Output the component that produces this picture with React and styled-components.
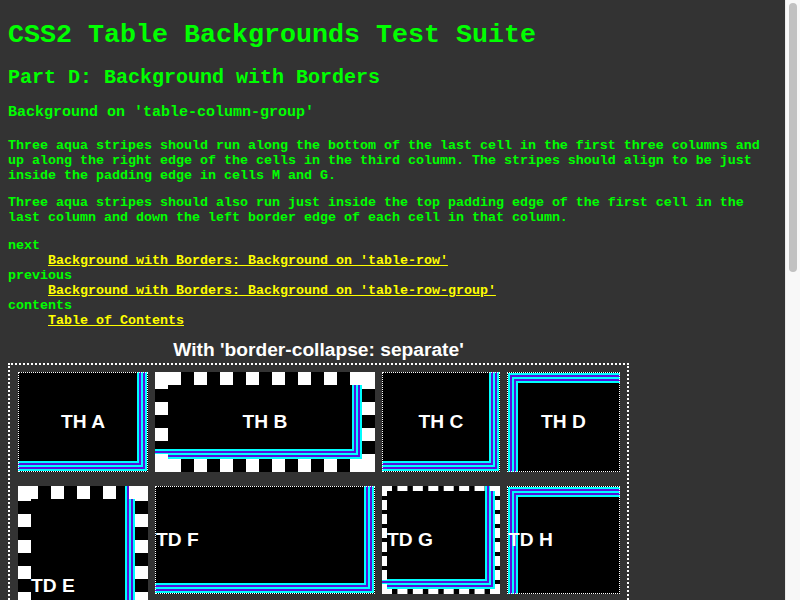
import React from 'react';
import styled, { createGlobalStyle } from 'styled-components';

const CYAN = '#00ffff';
const VIOLET = '#5511dd';
const STRIPES = [CYAN, VIOLET, CYAN, VIOLET, CYAN];
const BORDER = { dotted: 1, dashed: 5, checker: 13 };

const fill = (c) => `linear-gradient(${c}, ${c})`;

function stripeLayers(corner, b) {
  const [h, v] = corner === 'br' ? ['right', 'bottom'] : ['left', 'top'];
  return STRIPES.flatMap((c, k) => {
    const o = b + 2 * k;
    return [
      `${fill(c)} ${h} ${o}px ${v} ${o}px / calc(100% - ${o}px) 2px no-repeat border-box`,
      `${fill(c)} ${h} ${o}px ${v} ${o}px / 2px calc(100% - ${o}px) no-repeat border-box`,
    ];
  });
}

function checkerLayers(b, ox, oy) {
  const p = 2 * b;
  return [
    `${fill('#fff')} left top / ${b}px ${b}px no-repeat border-box`,
    `${fill('#fff')} right top / ${b}px ${b}px no-repeat border-box`,
    `${fill('#fff')} left bottom / ${b}px ${b}px no-repeat border-box`,
    `${fill('#fff')} right bottom / ${b}px ${b}px no-repeat border-box`,
    `linear-gradient(to right, #fff ${b}px, transparent ${b}px) ${ox}px top / ${p}px ${b}px repeat-x border-box`,
    `linear-gradient(to right, #fff ${b}px, transparent ${b}px) ${ox}px bottom / ${p}px ${b}px repeat-x border-box`,
    `linear-gradient(#fff ${b}px, transparent ${b}px) left ${oy}px / ${b}px ${p}px repeat-y border-box`,
    `linear-gradient(#fff ${b}px, transparent ${b}px) right ${oy}px / ${b}px ${p}px repeat-y border-box`,
  ];
}

const cellBackground = ({ $frame, $corner, $ox = 0, $oy = 0 }) => {
  const b = BORDER[$frame];
  const layers = [
    ...($frame === 'checker' ? checkerLayers(b, $ox, $oy) : []),
    ...($corner ? stripeLayers($corner, b) : []),
    '#000',
  ];
  return layers.join(',\n    ');
};

const cellBorder = ({ $frame }) =>
  $frame === 'checker'
    ? '13px solid transparent'
    : $frame === 'dashed'
    ? '5px dashed #fff'
    : '1px dotted #fff';

const GlobalStyle = createGlobalStyle`
  html, body {
    margin: 0;
    padding: 0;
    overflow: hidden;
    background: #333333;
  }
  body {
    color: #00ff00;
    font-family: "Liberation Mono", "Courier New", monospace;
    font-weight: bold;
    font-size: 13.333px;
  }
`;

const Screen = styled.div`
  display: flex;
  height: 100vh;
  overflow: hidden;
  background: #333333;
`;

const Page = styled.main`
  flex: 1 1 auto;
  min-width: 0;
  padding: 0 8px;
  overflow: hidden;
`;

const ScrollRail = styled.div`
  flex: 0 0 15px;
  box-sizing: border-box;
  height: 100%;
  background: #f8f8f8;
  border-left: 1px solid #ebebeb;
  padding: 3px 3px 0 3px;
`;

const ScrollThumb = styled.div`
  width: 8px;
  height: 269px;
  border-radius: 4px;
  background: #c1c1c1;
`;

const Title = styled.h1`
  margin: 20px 0 0;
  font-size: 26.667px;
  line-height: 30px;
  font-weight: bold;
`;

const Part = styled.h2`
  margin: 16px 0 0;
  font-size: 20px;
  line-height: 23px;
  font-weight: bold;
`;

const Section = styled.h3`
  margin: 15px 0 0;
  font-size: 15px;
  line-height: 17px;
  font-weight: bold;
`;

const Para = styled.p`
  margin: ${(p) => p.$top}px 0 0;
  line-height: 15px;
`;

const NavList = styled.dl`
  margin: 13px 0 0;
  line-height: 15px;
`;

const NavTerm = styled.dt`
  margin: 0;
`;

const NavItem = styled.dd`
  margin: 0 0 0 40px;
`;

const NavLink = styled.a`
  color: #ffff00;
  text-decoration: underline;
`;

const TableBlock = styled.div`
  display: flex;
  flex-direction: column;
  align-items: center;
  width: max-content;
  margin-top: ${(p) => p.$top}px;
`;

const Caption = styled.div`
  margin-bottom: 2px;
  color: #fff;
  font: bold 19.2px/22px "Liberation Sans", Arial, sans-serif;
`;

const Grid = styled.div`
  display: grid;
  grid-template-columns: 130px 220px 118px 113px;
  grid-template-rows: 100px 108px 77px 100px;
  column-gap: 7px;
  row-gap: 14px;
  padding: 7px 7px 7px 8px;
  border: 2px dotted #fff;
`;

const Cell = styled.div`
  box-sizing: border-box;
  display: flex;
  align-items: center;
  justify-content: ${(p) => (p.$head ? 'center' : 'flex-start')};
  grid-column: ${(p) => p.$col} / span ${(p) => p.$cspan || 1};
  grid-row: ${(p) => p.$row} / span ${(p) => p.$rspan || 1};
  border: ${cellBorder};
  background: ${cellBackground};
  color: #fff;
  font: bold 19.2px/22px "Liberation Sans", Arial, sans-serif;
  white-space: nowrap;
`;

const CELLS = [
  { t: 'TH A', head: true, col: 1, row: 1, frame: 'dotted', corner: 'br' },
  { t: 'TH B', head: true, col: 2, row: 1, frame: 'checker', corner: 'br', ox: 13, oy: 4 },
  { t: 'TH C', head: true, col: 3, row: 1, frame: 'dotted', corner: 'br' },
  { t: 'TH D', head: true, col: 4, row: 1, frame: 'dotted', corner: 'tl' },
  { t: 'TD E', col: 1, row: 2, rspan: 2, frame: 'checker', corner: 'br', ox: 7, oy: 2 },
  { t: 'TD F', col: 2, row: 2, frame: 'dotted', corner: 'br' },
  { t: 'TD G', col: 3, row: 2, frame: 'dashed', corner: 'br' },
  { t: 'TD H', col: 4, row: 2, frame: 'dotted', corner: 'tl' },
  { t: 'TD I', col: 2, row: 3, frame: 'dotted', corner: 'br' },
  { t: 'TD J', col: 3, row: 3, frame: 'dotted', corner: 'br' },
  { t: 'TD K', col: 4, row: 3, frame: 'dotted', corner: 'tl' },
  { t: 'TD L', col: 1, row: 4, frame: 'dotted', corner: 'br' },
  { t: 'TD M', col: 2, row: 4, cspan: 2, frame: 'dotted', corner: 'br' },
  { t: 'TD N', col: 4, row: 4, frame: 'dotted', corner: 'tl' },
];

function TestTable({ caption, top }) {
  return (
    <TableBlock $top={top}>
      <Caption>{caption}</Caption>
      <Grid>
        {CELLS.map((c) => (
          <Cell
            key={c.t}
            $head={c.head}
            $col={c.col}
            $row={c.row}
            $cspan={c.cspan}
            $rspan={c.rspan}
            $frame={c.frame}
            $corner={c.corner}
            $ox={c.ox}
            $oy={c.oy}
          >
            {c.t}
          </Cell>
        ))}
      </Grid>
    </TableBlock>
  );
}

export default function App() {
  return (
    <>
      <GlobalStyle />
      <Screen>
        <Page>
          <Title>CSS2 Table Backgrounds Test Suite</Title>
          <Part>Part D: Background with Borders</Part>
          <Section>Background on 'table-column-group'</Section>
          <Para $top={17}>
            Three aqua stripes should run along the bottom of the last cell in the first three columns and
            up along the right edge of the cells in the third column. The stripes should align to be just
            inside the padding edge in cells M and G.
          </Para>
          <Para $top={12}>
            Three aqua stripes should also run just inside the top padding edge of the first cell in the
            last column and down the left border edge of each cell in that column.
          </Para>
          <NavList>
            <NavTerm>next</NavTerm>
            <NavItem>
              <NavLink href="#next">Background with Borders: Background on 'table-row'</NavLink>
            </NavItem>
            <NavTerm>previous</NavTerm>
            <NavItem>
              <NavLink href="#previous">Background with Borders: Background on 'table-row-group'</NavLink>
            </NavItem>
            <NavTerm>contents</NavTerm>
            <NavItem>
              <NavLink href="#contents">Table of Contents</NavLink>
            </NavItem>
          </NavList>
          <TestTable caption="With 'border-collapse: separate'" top={11} />
        </Page>
        <ScrollRail>
          <ScrollThumb />
        </ScrollRail>
      </Screen>
    </>
  );
}
